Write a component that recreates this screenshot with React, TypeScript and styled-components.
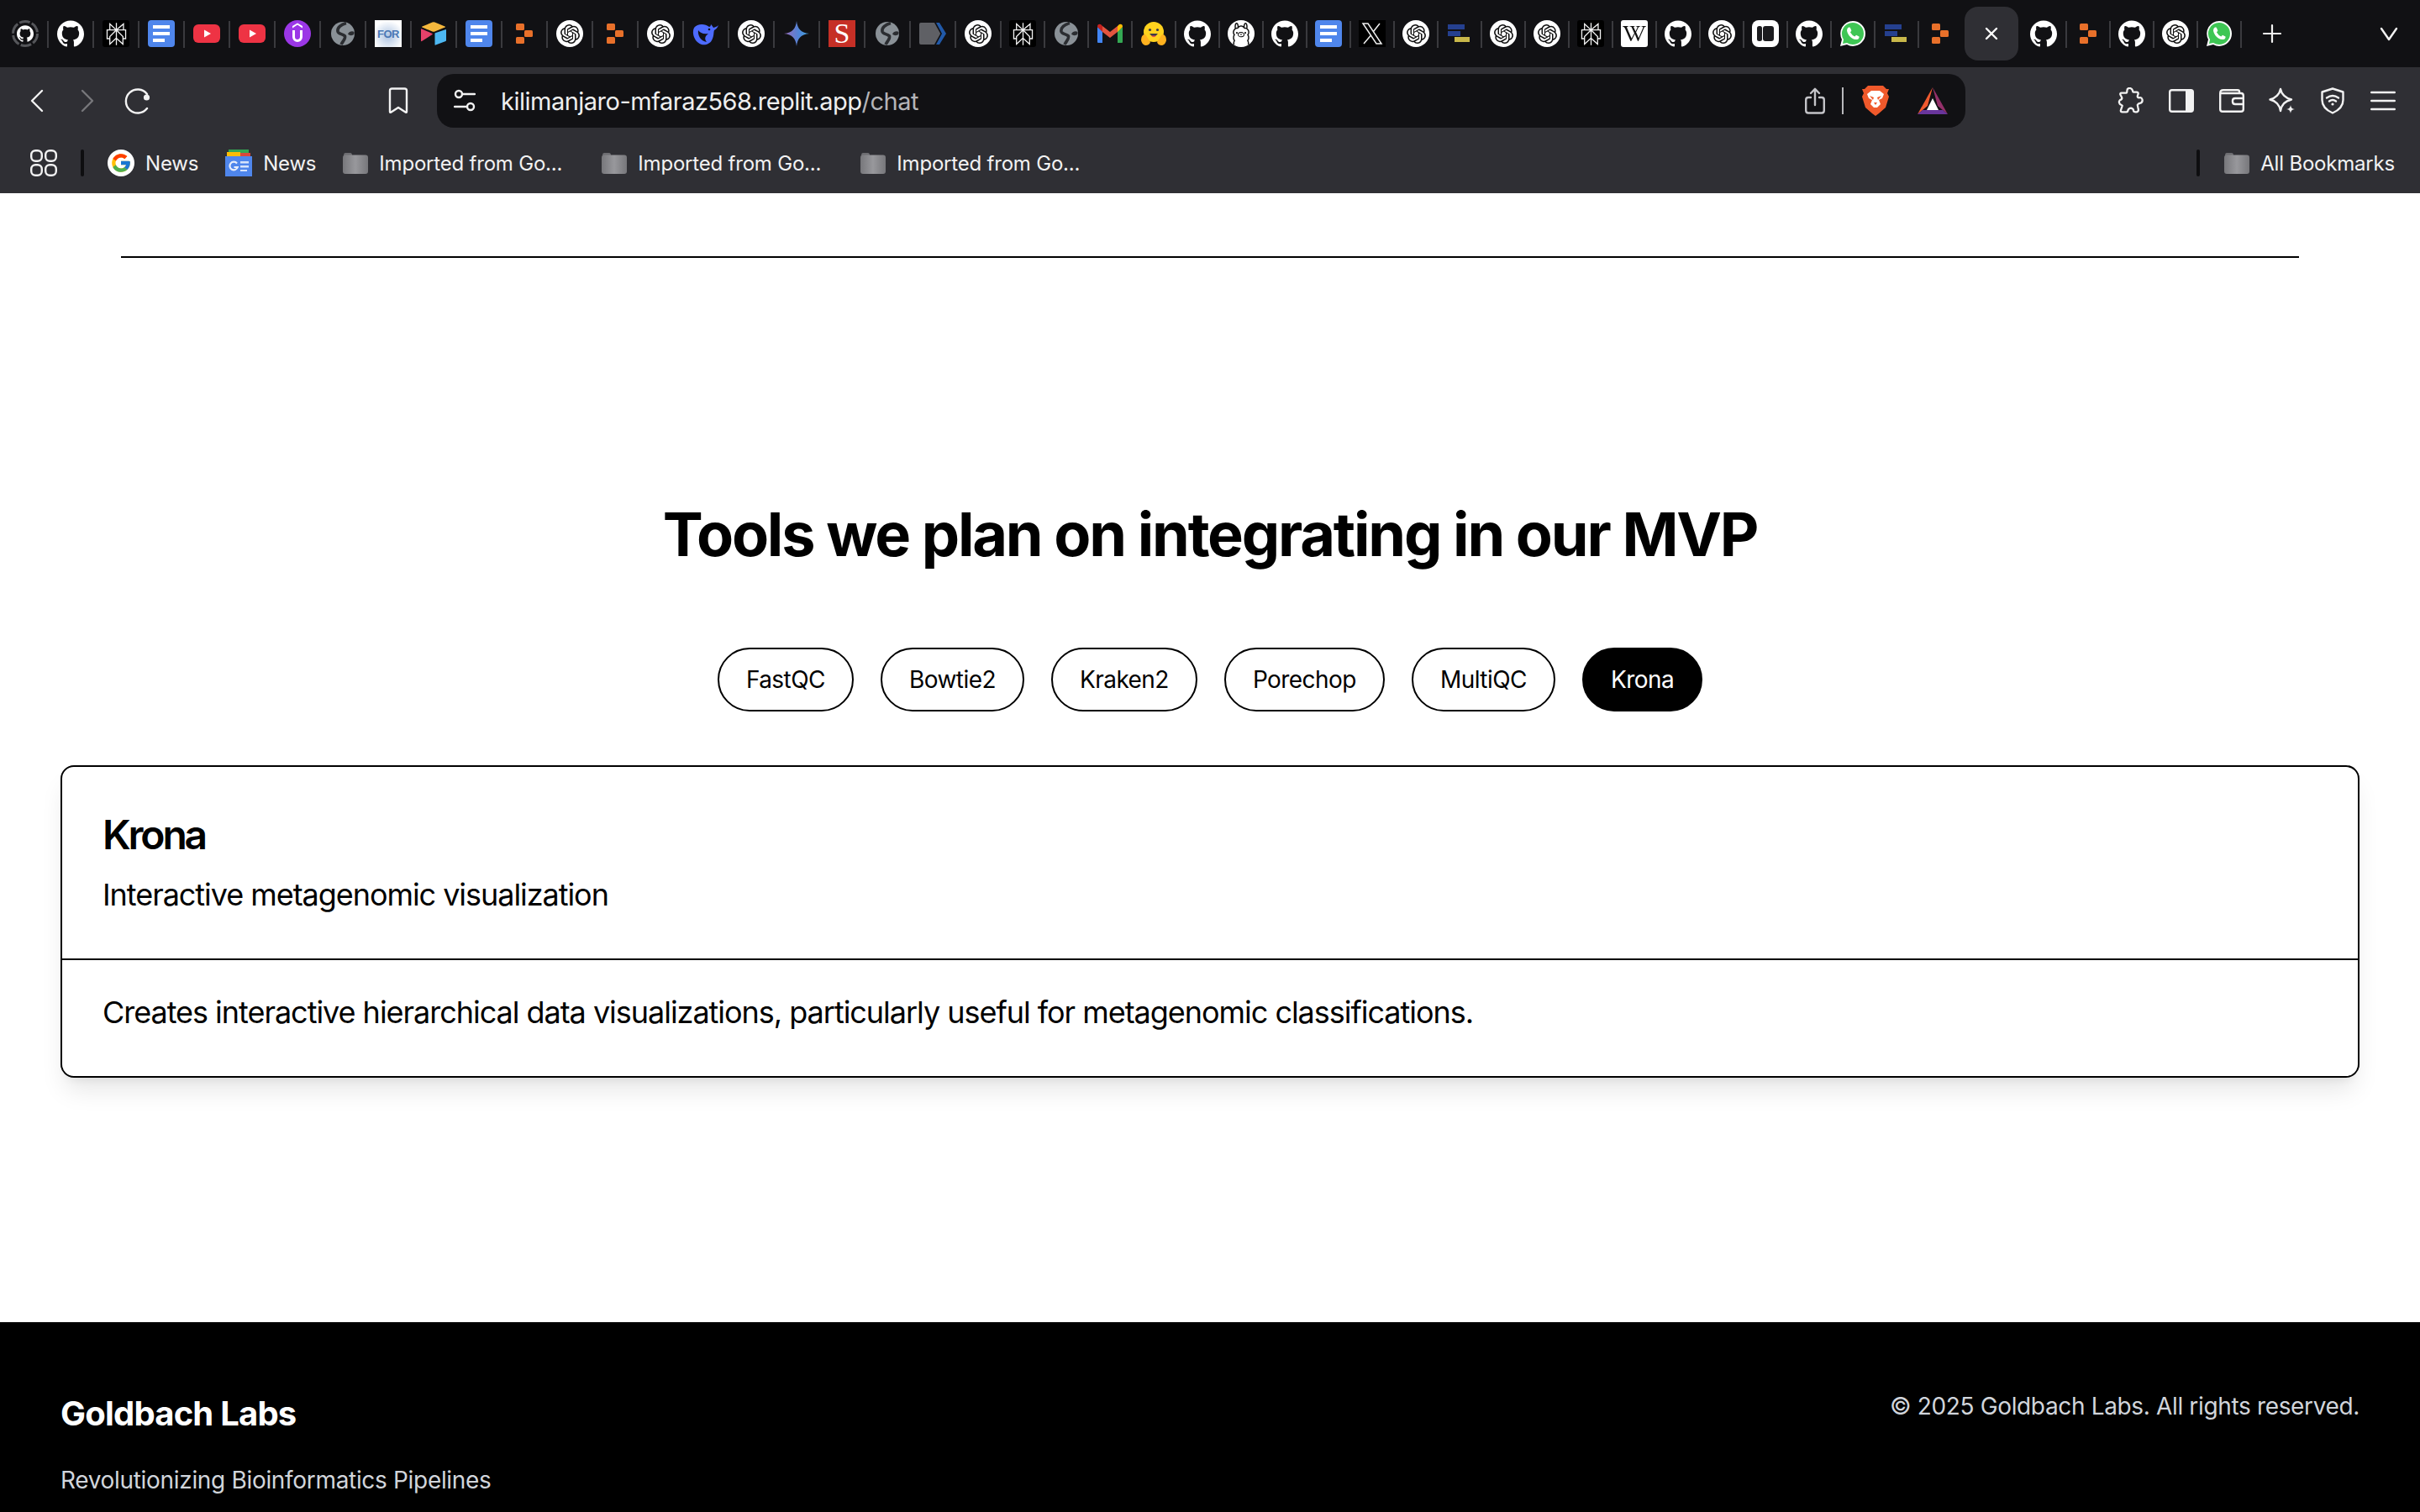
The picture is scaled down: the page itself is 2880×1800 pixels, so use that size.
import React from 'react';
import styled, {createGlobalStyle} from 'styled-components';
import {SiOpenai, SiGithub, SiPerplexity, SiOllama} from 'react-icons/si';
import {FaWikipediaW} from 'react-icons/fa';
import {FcGoogle} from 'react-icons/fc';

const GlobalStyle = createGlobalStyle`
    html, body {
        margin: 0;
        padding: 0;
        background: #fff;
        overflow: hidden;
    }
    body {
        font-family: Inter, "Liberation Sans", sans-serif;
        color: #000;
    }
`;

const Window = styled.div`
    width: 2880px;
    height: 1800px;
    display: flex;
    flex-direction: column;
    overflow: hidden;
`;

const TabStrip = styled.div`
    height: 80px;
    flex: none;
    display: flex;
    align-items: center;
    padding-left: 3px;
    background: #111114;
`;

const TabCell = styled.div<{$w: number; $noSep?: boolean}>`
    position: relative;
    width: ${({$w}) => $w}px;
    height: 32px;
    flex: none;
    display: flex;
    align-items: center;
    justify-content: center;

    &::after {
        display: ${({$noSep}) => ($noSep ? 'none' : 'block')};
        content: '';
        position: absolute;
        right: -1px;
        top: 1px;
        width: 2px;
        height: 32px;
        background: #3a3a3e;
    }
`;

const ActiveTab = styled.div`
    width: 64px;
    height: 64px;
    flex: none;
    margin: 0 3px;
    border-radius: 16px;
    background: #2f2f34;
    display: flex;
    align-items: center;
    justify-content: center;
`;

const StripButton = styled.div<{$left?: string}>`
    flex: none;
    display: flex;
    margin-left: ${({$left}) => $left || '0'};
`;

const Fav = styled.div<{$bg?: string; $radius?: number; $fg?: string; $size?: number}>`
    width: ${({$size}) => $size || 32}px;
    height: ${({$size}) => $size || 32}px;
    border-radius: ${({$radius}) => $radius || 0}px;
    background: ${({$bg}) => $bg || 'transparent'};
    color: ${({$fg}) => $fg || '#fff'};
    display: flex;
    align-items: center;
    justify-content: center;
`;

const SerifS = styled.span`
    font-family: "Liberation Serif", serif;
    font-weight: 400;
    font-size: 34px;
    line-height: 32px;
    color: #fff;
`;

const ForMark = styled.span`
    font-family: "Liberation Sans", sans-serif;
    font-weight: 700;
    font-size: 13px;
    color: #4a78b5;
    letter-spacing: -0.5px;
`;

const Toolbar = styled.div`
    height: 72px;
    flex: none;
    box-sizing: border-box;
    padding: 8px 14px 0 16px;
    display: flex;
    align-items: center;
    background: #2f2f34;
`;

const ToolSlot = styled.div<{$w?: number; $left?: number}>`
    width: ${({$w}) => $w || 60}px;
    margin-left: ${({$left}) => $left || 0}px;
    height: 40px;
    flex: none;
    display: flex;
    align-items: center;
    justify-content: center;
`;

const RightTools = styled.div`
    margin-left: auto;
    display: flex;
    align-items: center;
`;

const UrlBar = styled.div`
    width: 1819px;
    height: 64px;
    flex: none;
    margin-left: 18px;
    box-sizing: border-box;
    padding: 0 21px 0 20px;
    border-radius: 20px;
    background: #111114;
    display: flex;
    align-items: center;
`;

const UrlText = styled.div`
    margin-left: 30px;
    font-size: 29px;
    letter-spacing: -0.5px;
    color: #eeeeee;
    white-space: nowrap;
`;

const UrlPath = styled.span`
    color: #b4b4b8;
`;

const UrlActions = styled.div`
    margin-left: auto;
    display: flex;
    align-items: center;
`;

const UrlDivider = styled.div`
    width: 2px;
    height: 32px;
    margin: 0 22px 0 20px;
    background: #b8b8bc;
`;

const BookmarkBar = styled.div`
    height: 78px;
    flex: none;
    box-sizing: border-box;
    padding: 6px 30px 0 36px;
    display: flex;
    align-items: center;
    background: #2f2f34;
`;

const BarDivider = styled.div<{$left: number}>`
    width: 4px;
    height: 32px;
    flex: none;
    margin-left: ${({$left}) => $left}px;
    border-radius: 2px;
    background: #0e0e10;
`;

const BookmarkItem = styled.div<{$w?: number; $left?: number}>`
    width: ${({$w}) => ($w ? `${$w}px` : 'auto')};
    margin-left: ${({$left}) => $left || 0}px;
    flex: none;
    display: flex;
    align-items: center;
    gap: 13px;
`;

const BookmarkLabel = styled.span`
    font-size: 24px;
    letter-spacing: -0.2px;
    color: #f2f2f2;
    white-space: nowrap;
`;

const RightBookmarks = styled.div`
    margin-left: auto;
    display: flex;
    align-items: center;
`;

const Main = styled.main`
    flex: 1;
    display: flex;
    flex-direction: column;
    align-items: center;
    background: #fff;
`;

const Rule = styled.hr`
    width: 2592px;
    height: 2px;
    margin: 75px 0 0;
    border: 0;
    background: #000;
`;

const Heading = styled.h2`
    margin: 289px 0 0;
    font-size: 72px;
    line-height: 80px;
    font-weight: 700;
    letter-spacing: -2.2px;
    text-align: center;
`;

const PillRow = styled.div`
    margin-top: 95px;
    display: flex;
    gap: 32px;
`;

const Pill = styled.div<{$active?: boolean}>`
    height: 76px;
    box-sizing: border-box;
    padding: 0 32px;
    border: 2px solid #000;
    border-radius: 38px;
    display: flex;
    align-items: center;
    font-size: 28px;
    font-weight: 400;
    letter-spacing: -0.55px;
    color: ${({$active}) => ($active ? '#fff' : '#000')};
    background: ${({$active}) => ($active ? '#000' : '#fff')};
`;

const Card = styled.section`
    align-self: stretch;
    margin: 64px 72px 0;
    border: 2px solid #000;
    border-radius: 16px;
    background: #fff;
    box-shadow: 0 20px 30px -6px rgba(0, 0, 0, 0.1), 0 8px 12px -8px rgba(0, 0, 0, 0.1);
`;

const CardHeader = styled.div`
    padding: 49px 48px 52px;
    border-bottom: 2px solid #000;
`;

const CardTitle = styled.h3`
    margin: 0;
    font-size: 48px;
    line-height: 64px;
    font-weight: 600;
    letter-spacing: -3.2px;
`;

const CardSubtitle = styled.p`
    margin: 15px 0 0;
    font-size: 36px;
    line-height: 48px;
    letter-spacing: -1.05px;
`;

const CardBody = styled.div`
    padding: 38px 48px 52px;
    font-size: 36px;
    line-height: 48px;
    letter-spacing: -1.03px;
`;

const Footer = styled.footer`
    flex: none;
    height: 226px;
    box-sizing: border-box;
    padding: 81px 72px 0;
    display: flex;
    justify-content: space-between;
    align-items: flex-start;
    background: #000;
    color: #fff;
`;

const Brand = styled.div`
    font-size: 40px;
    line-height: 56px;
    font-weight: 700;
    letter-spacing: -0.8px;
`;

const Tagline = styled.div`
    margin-top: 31px;
    font-size: 28px;
    line-height: 40px;
    letter-spacing: -0.32px;
    color: #d1d5db;
`;

const Copyright = styled.div`
    margin-top: -1px;
    font-size: 28px;
    line-height: 40px;
    letter-spacing: -0.35px;
    color: #d1d5db;
`;

const line = {fill: 'none', stroke: '#f2f2f2', strokeWidth: 2.4, strokeLinecap: 'round', strokeLinejoin: 'round'} as const;

const Docs = () => (
    <svg width='32' height='32' viewBox='0 0 32 32'>
        <rect width='32' height='32' rx='4' fill='#4f86ec'/>
        <rect x='6' y='6' width='20' height='4' fill='#fff'/>
        <rect x='6' y='14' width='20' height='4' fill='#fff'/>
        <rect x='6' y='22' width='14' height='4' fill='#fff'/>
    </svg>
);

const YouTube = () => (
    <svg width='32' height='32' viewBox='0 0 32 32'>
        <rect y='5' width='32' height='22' rx='6' fill='#ee3344'/>
        <path d='M13 11.5 L21 16 L13 20.5 Z' fill='#fff'/>
    </svg>
);

const Udemy = () => (
    <svg width='32' height='32' viewBox='0 0 32 32'>
        <circle cx='16' cy='16' r='16' fill='#9b37e6'/>
        <path d='M10 9.5 L16 5.5 L22 9.5 V7 L16 3.5 L10 7 Z' fill='#fff'/>
        <path d='M11.5 12 V20 A4.5 4.5 0 0 0 20.5 20 V12' fill='none' stroke='#fff' strokeWidth='3'/>
    </svg>
);

const Globe = () => (
    <svg width='32' height='32' viewBox='0 0 32 32'>
        <circle cx='16' cy='16' r='14' fill='#8a9197'/>
        <path d='M20 3.500 C14 5 9 9 10 13.500 C11 17 16 16 18.500 19 C19.500 22 16 25 14 29' fill='none' stroke='#2b2d31' strokeWidth='3.600'/>
        <path d='M29.500 14 C27 12.500 23.500 13.500 22 16.500 C24.500 19 27.500 18.500 29.500 16.500 Z' fill='#2b2d31'/>
    </svg>
);

const Airtable = () => (
    <svg width='32' height='32' viewBox='0 0 32 32'>
        <path d='M14.5 2.5 L2.5 7.5 Q1.5 8 2.5 8.6 L14.5 13.5 Q16 14 17.5 13.5 L29.5 8.6 Q30.5 8 29.5 7.5 L17.5 2.5 Q16 2 14.5 2.5 Z' fill='#f5b83d'/>
        <path d='M17.5 16 V29 Q17.5 30 18.5 29.6 L30.5 25 Q31 24.7 31 24 V11.8 Q31 10.8 30 11.2 L18 15.2 Q17.5 15.4 17.5 16 Z' fill='#4db8f2'/>
        <path d='M1 11 V24.5 Q1 25.5 2 25 L14.5 17 Q15 16.4 14.5 16 L2 10.4 Q1 10 1 11 Z' fill='#e6416a'/>
    </svg>
);

const Orange = () => (
    <svg width='32' height='32' viewBox='0 0 32 32' fill='#e8702a'>
        <rect x='6' y='4' width='10' height='8' rx='1.5'/>
        <rect x='16' y='12' width='10' height='8' rx='1.5'/>
        <rect x='6' y='20' width='10' height='8' rx='1.5'/>
    </svg>
);

const DeepSeek = () => (
    <svg width='32' height='32' viewBox='0 0 32 32'>
        <path d='M31 6 C29 8 27 8 25 9 C24 7 23 6 22 5 C22 7 21 8 20 8 C15 4 6 4 2 9 C-1 15 2 26 11 29 C16 30 21 28 23 24 C26 19 25 14 26 12 C28 11 30 9 31 6 Z' fill='#4d6bfe'/>
        <path d='M7 12 C6 18 10 25 17 26 C14 22 15 19 19 16 C13 17 9 15 7 12 Z' fill='#111114'/>
        <circle cx='20' cy='11' r='1.3' fill='#111114'/>
    </svg>
);

const Gemini = () => (
    <svg width='32' height='32' viewBox='0 0 32 32'>
        <defs>
            <linearGradient id='gem' x1='0' y1='0' x2='1' y2='0'>
                <stop offset='0' stopColor='#9a6bb8'/>
                <stop offset='0.6' stopColor='#4f86d9'/>
                <stop offset='1' stopColor='#45a5dd'/>
            </linearGradient>
        </defs>
        <path d='M16 1 C17 10 21 15 31 16 C21 17 17 22 16 31 C15 22 11 17 1 16 C11 15 15 10 16 1 Z' fill='url(#gem)'/>
    </svg>
);

const ArrowTab = () => (
    <svg width='32' height='32' viewBox='0 0 32 32'>
        <path d='M2 3 H20 L28 16 L20 29 H2 Q0 29 0 27 V5 Q0 3 2 3 Z' fill='#5f6065' transform='translate(0 0) scale(0.9 1)'/>
        <path d='M20 3 H24 L32 16 L24 29 H20 L27 16 Z' fill='#2159a8'/>
    </svg>
);

const Gmail = () => (
    <svg width='32' height='32' viewBox='0 0 32 32'>
        <path d='M2 27 H7 V13 L1 8 V26 Q1 27 2 27 Z' fill='#4285f4'/>
        <path d='M25 27 H30 Q31 27 31 26 V8 L25 13 Z' fill='#34a853'/>
        <path d='M7 14 L16 21 L25 14 V7 L16 14 L7 7 Z' fill='#e2543f'/>
        <path d='M1 8 Q1 4 5 5 L7 7 V14 Z' fill='#c5221f'/>
        <path d='M25 7 L27 5 Q31 4 31 8 L25 14 Z' fill='#fbbc04'/>
    </svg>
);

const HuggingFace = () => (
    <svg width='32' height='32' viewBox='0 0 32 32'>
        <circle cx='16' cy='14' r='12' fill='#ffd21e'/>
        <circle cx='11.5' cy='11.5' r='1.6' fill='#3a3b45'/>
        <circle cx='20.5' cy='11.5' r='1.6' fill='#3a3b45'/>
        <path d='M11 16 Q16 23 21 16 Z' fill='#3a3b45'/>
        <path d='M13 18.5 Q16 22 19 18.5 Z' fill='#ef4e4e'/>
        <path d='M1 24 Q1 18 5 17 Q7 17 8 20 L12 26 Q11 30 6 30 Q2 29 1 24 Z' fill='#ffb11f'/>
        <path d='M31 24 Q31 18 27 17 Q25 17 24 20 L20 26 Q21 30 26 30 Q30 29 31 24 Z' fill='#ffb11f'/>
    </svg>
);

const NavyBars = () => (
    <svg width='32' height='32' viewBox='0 0 32 32'>
        <rect x='2' y='5' width='20' height='6' fill='#25408f'/>
        <rect x='2' y='13' width='15' height='6' fill='#25408f'/>
        <rect x='10' y='20' width='18' height='6' fill='#c9b84a'/>
    </svg>
);

const RoundedApp = () => (
    <svg width='32' height='32' viewBox='0 0 32 32'>
        <rect width='32' height='32' rx='8' fill='#fff'/>
        <rect x='6' y='7' width='6' height='18' rx='2.5' fill='#1c1c1f'/>
        <rect x='13' y='7' width='13' height='18' rx='3' fill='#1c1c1f'/>
    </svg>
);

const XLogo = () => (
    <svg width='32' height='32' viewBox='0 0 32 32'>
        <rect width='32' height='32' fill='#000'/>
        <path d='M5 4 H11 L27 28 H21 Z M25 4 L17.500 13.500 M14.500 18 L6 28' fill='none' stroke='#eee' strokeWidth='1.500'/>
    </svg>
);

const WhatsApp = () => (
    <svg width='32' height='32' viewBox='0 0 32 32'>
        <path d='M16 1 A15 15 0 0 1 16 31 A15 15 0 0 1 9 29 L1 31 L3 23 A15 15 0 0 1 16 1 Z' fill='#fff'/>
        <path d='M16 3 A13 13 0 0 1 16 29 A13 13 0 0 1 9 27 L4 28 L5 23 A13 13 0 0 1 16 3 Z' fill='#3ec654'/>
        <path d='M11 8.5 Q9 9.5 9 12.5 Q10 18 15 21.5 Q19 24 22.5 22.5 Q24 21 23.5 19.5 L20 17.8 L18.4 19.5 Q15 18 13 14.5 L14.4 12.6 L12.8 8.8 Q12 8.3 11 8.5 Z' fill='#fff'/>
    </svg>
);

const OpenAi = () => (
    <Fav $bg='#fff' $radius={16} $fg='#111'>
        <SiOpenai size={23}/>
    </Fav>
);

const Perplexity = () => (
    <Fav $bg='#000' $radius={3} $fg='#f2f2f2'>
        <SiPerplexity size={27}/>
    </Fav>
);

const Github = () => (
    <Fav><SiGithub size={32} color='#fff'/></Fav>
);

const LoadingGithub = () => (
    <svg width='32' height='32' viewBox='0 0 32 32'>
        <circle cx='16' cy='16' r='14.500' fill='none' stroke='#55565a' strokeWidth='3' strokeDasharray='12.800 2.400'/>
        <foreignObject x='6' y='6' width='20' height='20'>
            <SiGithub size={20} color='#fff'/>
        </foreignObject>
    </svg>
);

const FAVICONS: Record<string, React.ReactNode> = {
    loading: <LoadingGithub/>,
    github: <Github/>,
    perplexity: <Perplexity/>,
    docs: <Docs/>,
    youtube: <YouTube/>,
    udemy: <Udemy/>,
    globe: <Globe/>,
    for: <Fav $bg='radial-gradient(circle at 50% 60%, #aec4e2 0, #fff 75%)'><ForMark>{'FOR'}</ForMark></Fav>,
    airtable: <Airtable/>,
    orange: <Orange/>,
    openai: <OpenAi/>,
    deepseek: <DeepSeek/>,
    gemini: <Gemini/>,
    serif: <Fav $bg='#c62f26'><SerifS>{'S'}</SerifS></Fav>,
    arrow: <ArrowTab/>,
    gmail: <Gmail/>,
    hf: <HuggingFace/>,
    ollama: <Fav $bg='#fff' $radius={16} $fg='#111'><SiOllama size={26}/></Fav>,
    x: <XLogo/>,
    bars: <NavyBars/>,
    wiki: <Fav $bg='#fff' $radius={3} $fg='#111'><FaWikipediaW size={28}/></Fav>,
    rounded: <RoundedApp/>,
    whatsapp: <WhatsApp/>,
};

const TABS_BEFORE = [
    'loading', 'github', 'perplexity', 'docs', 'youtube', 'youtube', 'udemy', 'globe', 'for', 'airtable', 'docs',
    'orange', 'openai', 'orange', 'openai', 'deepseek', 'openai', 'gemini', 'serif', 'globe', 'arrow', 'openai',
    'perplexity', 'globe', 'gmail', 'hf', 'github', 'ollama', 'github', 'docs', 'x', 'openai', 'bars', 'openai',
    'openai', 'perplexity', 'wiki', 'github', 'openai', 'rounded', 'github', 'whatsapp', 'bars', 'orange',
];
const TABS_AFTER = ['github', 'orange', 'github', 'openai', 'whatsapp'];

const Folder = () => (
    <svg width='30' height='26' viewBox='0 0 30 26'>
        <defs>
            <linearGradient id='folder' x1='0' y1='0' x2='1' y2='0'>
                <stop offset='0' stopColor='#77777b'/>
                <stop offset='0.5' stopColor='#98989c'/>
                <stop offset='1' stopColor='#77777b'/>
            </linearGradient>
        </defs>
        <path d='M1 4 Q1 1 3 1 H9 Q11 1 11 4 Z' fill='#6d6d71'/>
        <rect y='3.5' width='30' height='22.5' rx='3' fill='url(#folder)'/>
    </svg>
);

const GoogleNews = () => (
    <svg width='32' height='32' viewBox='0 0 32 32'>
        <rect x='4' y='0' width='24' height='6' fill='#34a853'/>
        <rect x='2' y='3' width='16' height='6' fill='#fbbc04'/>
        <rect x='18' y='4' width='12' height='5' fill='#d9483b'/>
        <rect y='8' width='32' height='24' fill='#4f86ec'/>
        <rect x='18' y='14' width='10' height='2.5' fill='#d7e4fb'/>
        <rect x='18' y='19' width='10' height='2.5' fill='#d7e4fb'/>
        <rect x='18' y='24' width='8' height='2' fill='#d7e4fb'/>
        <path d='M14 16.500 A4.800 4.800 0 1 0 14.800 21 H10.500' fill='none' stroke='#e8eefb' strokeWidth='2.200'/>
    </svg>
);

const BraveLion = () => (
    <svg width='32' height='36' viewBox='0 0 32 36'>
        <path d='M7 0 H25 L29 4 L32 4 L30 9 L32 13 L28 26 L20 33 L16 36 L12 33 L4 26 L0 13 L2 9 L0 4 L3 4 Z' fill='#f0592b'/>
        <path d='M6 10 L11 6 H21 L26 10 L24 15 L20 17 L22 22 L18 26 H14 L10 22 L12 17 L8 15 Z' fill='#fff'/>
        <path d='M9 12 L14 14 L13 17 Z M23 12 L18 14 L19 17 Z M14 20 H18 L16 23 Z' fill='#f0592b'/>
    </svg>
);

const BatTriangle = () => (
    <svg width='36' height='32' viewBox='0 0 36 32'>
        <path d='M18 0 L0 32 L12 22 Z' fill='#ef5a2f'/>
        <path d='M18 0 L36 32 L24 22 Z' fill='#94306a'/>
        <path d='M0 32 H36 L30 27 H6 Z' fill='#69359c'/>
        <path d='M18 13 L25 27 H11 Z' fill='#fff'/>
    </svg>
);

const App = () => (
    <Window>
        <GlobalStyle/>
        <TabStrip>
            {TABS_BEFORE.map((kind, i) => (
                <TabCell
                    key={`b${i}`}
                    $w={i < 22 ? 54 : 52}
                    $noSep={i === TABS_BEFORE.length - 1}
                >
                    {FAVICONS[kind]}
                </TabCell>
            ))}
            <ActiveTab>
                <svg width='20' height='20' viewBox='0 0 20 20'>
                    <path d='M4 4 L16 16 M16 4 L4 16' stroke='#fff' strokeWidth='2.4' strokeLinecap='round'/>
                </svg>
            </ActiveTab>
            {TABS_AFTER.map((kind, i) => (
                <TabCell key={`a${i}`} $w={i === 0 ? 54 : 52}>
                    {FAVICONS[kind]}
                </TabCell>
            ))}
            <StripButton $left='25px'>
                <svg width='24' height='24' viewBox='0 0 24 24'>
                    <path d='M12 2 V22 M2 12 H22' stroke='#f2f2f2' strokeWidth='2.2' strokeLinecap='round'/>
                </svg>
            </StripButton>
            <StripButton $left='115px'>
                <svg width='24' height='24' viewBox='0 0 24 24'>
                    <path d='M3 6 L12 19 L21 6' {...line}/>
                </svg>
            </StripButton>
        </TabStrip>

        <Toolbar>
            <ToolSlot $w={56}>
                <svg width='16' height='28' viewBox='0 0 16 28'>
                    <path d='M14 2 L2 14 L14 26' {...line}/>
                </svg>
            </ToolSlot>
            <ToolSlot $w={56} $left={4}>
                <svg width='16' height='28' viewBox='0 0 16 28'>
                    <path d='M2 2 L14 14 L2 26' {...line} stroke='#77777b'/>
                </svg>
            </ToolSlot>
            <ToolSlot $w={56} $left={4}>
                <svg width='32' height='32' viewBox='0 0 32 32'>
                    <path d='M27 8 A14 14 0 1 0 27 25' {...line}/>
                    <circle cx='26.5' cy='12' r='3.6' fill='#f2f2f2'/>
                </svg>
            </ToolSlot>
            <ToolSlot $w={56} $left={254}>
                <svg width='24' height='32' viewBox='0 0 24 32'>
                    <path d='M2 4 Q2 1.500 4.500 1.500 H19.500 Q22 1.500 22 4 V29 Q22 30.500 20.500 29.500 L12 24 L3.500 29.500 Q2 30.500 2 29 Z' {...line}/>
                </svg>
            </ToolSlot>
            <UrlBar>
                <svg width='26' height='28' viewBox='0 0 26 28'>
                    <circle cx='6' cy='6' r='4' {...line}/>
                    <path d='M10 6 H25 M1 21 H16' {...line}/>
                    <circle cx='20' cy='21' r='4' {...line}/>
                </svg>
                <UrlText>
                    {'kilimanjaro-mfaraz568.replit.app'}
                    <UrlPath>{'/chat'}</UrlPath>
                </UrlText>
                <UrlActions>
                    <svg width='24' height='32' viewBox='0 0 24 32'>
                        <path d='M7 12 H4 Q1.200 12 1.200 15 V27.500 Q1.200 30.500 4 30.500 H20 Q22.800 30.500 22.800 27.500 V15 Q22.800 12 20 12 H17 M12 21 V2 M7 7 L12 1.800 L17 7' {...line} stroke='#c4c4c8'/>
                    </svg>
                    <UrlDivider/>
                    <BraveLion/>
                    <ToolSlot $w={36} $left={34}>
                        <BatTriangle/>
                    </ToolSlot>
                </UrlActions>
            </UrlBar>
            <RightTools>
                <ToolSlot>
                    <svg width='32' height='32' viewBox='0 0 32 32'>
                        <path d='M11 7 H5 Q3 7 3.500 9 L5.500 13 Q6 15 3 16 Q1 18 3 21 Q5 22 6 23 L4 29 Q4 31 6 31 H11 Q13 31 13 29 Q14 26 17 26 Q20 27 20 29 Q20 31 23 31 H24 Q27 30 26 27 L25 22 Q26 20 28 20 Q32 19 31 15 Q30 12 27 13 Q25 13 25 11 L26 8 Q26 6 24 6 H20 Q19 6 19 4 Q18 1 15 1 Q12 1 12 4 Q12 7 11 7 Z' {...line} transform='scale(0.95)'/>
                    </svg>
                </ToolSlot>
                <ToolSlot>
                    <svg width='30' height='28' viewBox='0 0 30 28'>
                        <rect x='1.200' y='1.200' width='27.600' height='25.600' rx='2.500' {...line}/>
                        <path d='M20 1.200 H26.500 Q28.800 1.200 28.800 3.500 V24.500 Q28.800 26.800 26.500 26.800 H20 Z' fill='#f2f2f2'/>
                    </svg>
                </ToolSlot>
                <ToolSlot>
                    <svg width='30' height='28' viewBox='0 0 30 28'>
                        <path d='M3 5 H24 V3 Q24 1.200 22 1.200 H5 Q1.200 1.200 1.200 5 V24 Q1.200 26.800 4 26.800 H26 Q28.800 26.800 28.800 24 V8 Q28.800 5 26 5 H3' {...line}/>
                        <path d='M28.800 11 H19 Q16 11 16 14 V15 Q16 18 19 18 H28.800' {...line}/>
                    </svg>
                </ToolSlot>
                <ToolSlot>
                    <svg width='32' height='32' viewBox='0 0 32 32'>
                        <path d='M14 2 C15 8 20 13 27 14.500 C20 16 15 21 14 28 C13 21 8 16 1.500 14.500 C8 13 13 8 14 2 Z' {...line}/>
                        <path d='M26 21 C26.500 24 27.500 25.500 31 26 C27.500 26.500 26.500 28 26 31 C25.500 28 24.500 26.500 21 26 C24.500 25.500 25.500 24 26 21 Z' fill='#f2f2f2'/>
                    </svg>
                </ToolSlot>
                <ToolSlot>
                    <svg width='28' height='32' viewBox='0 0 28 32'>
                        <path d='M14 1.500 L26.500 5.500 V15 Q26.500 25 14 30.500 Q1.500 25 1.500 15 V5.500 Z' {...line}/>
                        <path d='M7 12.500 Q14 7.500 21 12.500 M10 16.500 Q14 13.500 18 16.500' {...line}/>
                        <circle cx='14' cy='20' r='1.600' fill='#f2f2f2'/>
                    </svg>
                </ToolSlot>
                <ToolSlot>
                    <svg width='30' height='24' viewBox='0 0 30 24'>
                        <path d='M1.200 2 H28.800 M1.200 12 H28.800 M1.200 22 H28.800' {...line}/>
                    </svg>
                </ToolSlot>
            </RightTools>
        </Toolbar>

        <BookmarkBar>
            <svg width='32' height='32' viewBox='0 0 32 32'>
                <rect x='1.200' y='1.200' width='12.600' height='12.600' rx='5' {...line}/>
                <rect x='18.200' y='1.200' width='12.600' height='12.600' rx='5' {...line}/>
                <rect x='1.200' y='18.200' width='12.600' height='12.600' rx='5' {...line}/>
                <rect x='18.200' y='18.200' width='12.600' height='12.600' rx='5' {...line}/>
            </svg>
            <BarDivider $left={28}/>
            <BookmarkItem $left={28}>
                <Fav $bg='#fff' $radius={16}><FcGoogle size={26}/></Fav>
                <BookmarkLabel>{'News'}</BookmarkLabel>
            </BookmarkItem>
            <BookmarkItem $left={32}>
                <GoogleNews/>
                <BookmarkLabel>{'News'}</BookmarkLabel>
            </BookmarkItem>
            {[0, 1, 2].map((n) => (
                <BookmarkItem key={n} $w={273} $left={n === 0 ? 32 : 35}>
                    <Folder/>
                    <BookmarkLabel>{'Imported from Go...'}</BookmarkLabel>
                </BookmarkItem>
            ))}
            <RightBookmarks>
                <BarDivider $left={0}/>
                <BookmarkItem $left={29}>
                    <Folder/>
                    <BookmarkLabel>{'All Bookmarks'}</BookmarkLabel>
                </BookmarkItem>
            </RightBookmarks>
        </BookmarkBar>

        <Main>
            <Rule/>
            <Heading>{'Tools we plan on integrating in our MVP'}</Heading>
            <PillRow>
                <Pill>{'FastQC'}</Pill>
                <Pill>{'Bowtie2'}</Pill>
                <Pill>{'Kraken2'}</Pill>
                <Pill>{'Porechop'}</Pill>
                <Pill>{'MultiQC'}</Pill>
                <Pill $active={true}>{'Krona'}</Pill>
            </PillRow>
            <Card>
                <CardHeader>
                    <CardTitle>{'Krona'}</CardTitle>
                    <CardSubtitle>{'Interactive metagenomic visualization'}</CardSubtitle>
                </CardHeader>
                <CardBody>
                    {'Creates interactive hierarchical data visualizations, particularly useful for metagenomic classifications.'}
                </CardBody>
            </Card>
        </Main>

        <Footer>
            <div>
                <Brand>{'Goldbach Labs'}</Brand>
                <Tagline>{'Revolutionizing Bioinformatics Pipelines'}</Tagline>
            </div>
            <Copyright>{'© 2025 Goldbach Labs. All rights reserved.'}</Copyright>
        </Footer>
    </Window>
);

export default App;
